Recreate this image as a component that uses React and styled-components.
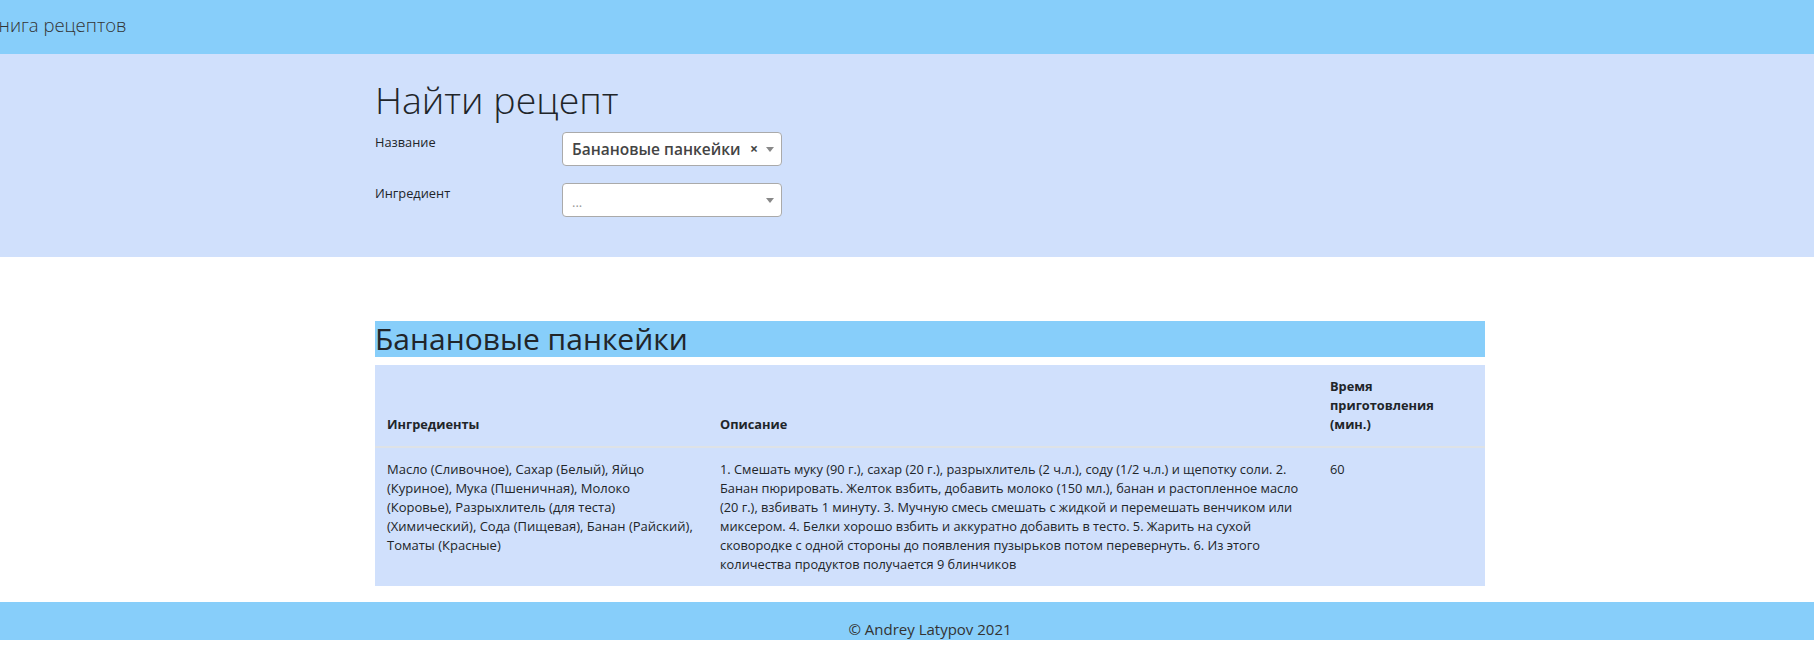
import React from 'react';
import styled, { createGlobalStyle } from 'styled-components';

const GlobalStyle = createGlobalStyle`
  body {
    margin: 0;
    font-family: "Open Sans", "Liberation Sans", sans-serif;
    color: #212529;
    background: #fff;
  }
`

// Layout
const Container = styled.div`
  width: 1110px;
  margin-left: calc(50% - 532px);
`
const Header = styled.header`
  height: 54px;
  box-sizing: border-box;
  padding-top: 11px;
  background: #87cefa;
  overflow: hidden;
`
const Brand = styled.a`
  display: block;
  margin-left: -12px;
  font-size: 18.5px;
  font-weight: 300;
  line-height: 28px;
  color: #333;
  text-decoration: none;
`
const Search = styled.section`
  background: #d0e0fc;
  padding: 22px 0 23px;
`
const Title = styled.h1`
  margin: 0 0 8px;
  font-size: 37.5px;
  font-weight: 300;
  line-height: 48px;
`
const FormRow = styled.div`
  display: grid;
  grid-template-columns: 187px 220px;
  margin-bottom: 17px;
`
const Label = styled.label`
  font-size: 12.8px;
  line-height: 19.2px;
  padding-top: 1px;
`

// Select
const SelectBox = styled.div`
  height: 34px;
  box-sizing: border-box;
  display: flex;
  align-items: center;
  padding: 0 7px 0 9px;
  background: #fff;
  border: 1px solid #aaa;
  border-radius: 4px;
`
const Value = styled.span`
  flex: 1;
  font-size: ${p => (p.placeholder ? '13px' : '15.5px')};
  font-weight: ${p => (p.placeholder ? 400 : 600)};
  color: ${p => (p.placeholder ? '#999' : '#444')};
  padding-top: ${p => (p.placeholder ? '4px' : '0')};
`
const Clear = styled.span`
  font-size: 14px;
  font-weight: 700;
  color: #444;
  margin-right: 8px;
  line-height: 1;
`
const Arrow = styled.span`
  width: 0;
  height: 0;
  border-style: solid;
  border-width: 5px 4px 0 4px;
  border-color: #888 transparent transparent transparent;
`

const Select = ({value, placeholder}) => (
  <SelectBox>
    <Value placeholder={value ? undefined : 1}>{value || placeholder}</Value>
    {value && <Clear>×</Clear>}
    <Arrow />
  </SelectBox>
);

// Recipe
const Main = styled.main`
  padding-top: 64px;
`
const RecipeTitle = styled.h2`
  margin: 0 0 8px;
  font-size: 30px;
  font-weight: 400;
  line-height: 36px;
  background: #87cefa;
`
const Table = styled.table`
  width: 1110px;
  table-layout: fixed;
  border-collapse: collapse;
  background: #d0e0fc;
  font-size: 12.8px;
  line-height: 19px;
  margin-bottom: 16px;
`
const Th = styled.th`
  width: ${p => p.w - 24}px;
  padding: 12px;
  text-align: left;
  vertical-align: bottom;
  font-weight: 700;
  border-bottom: 2px solid #dee2e6;
`
const Td = styled.td`
  padding: 12px;
  vertical-align: top;
  font-size: ${p => (p.wide ? '13px' : 'inherit')};
`
const Footer = styled.footer`
  height: 38px;
  box-sizing: border-box;
  padding: 16px 0 0 46px;
  background: #87cefa;
  text-align: center;
  font-size: 15px;
  line-height: 22px;
  color: #333;
  overflow: hidden;
`

const recipe = {
  name: 'Банановые панкейки',
  ingredients: 'Масло (Сливочное), Сахар (Белый), Яйцо (Куриное), Мука (Пшеничная), Молоко (Коровье), Разрыхлитель (для теста) (Химический), Сода (Пищевая), Банан (Райский), Томаты (Красные)',
  description: '1. Смешать муку (90 г.), сахар (20 г.), разрыхлитель (2 ч.л.), соду (1/2 ч.л.) и щепотку соли. 2. Банан пюрировать. Желток взбить, добавить молоко (150 мл.), банан и растопленное масло (20 г.), взбивать 1 минуту. 3. Мучную смесь смешать с жидкой и перемешать венчиком или миксером. 4. Белки хорошо взбить и аккуратно добавить в тесто. 5. Жарить на сухой сковородке с одной стороны до появления пузырьков потом перевернуть. 6. Из этого количества продуктов получается 9 блинчиков',
  time: 60,
};

const App = () => {
  return (
    <>
      <GlobalStyle />
      <Header>
        <Brand href="#">Книга рецептов</Brand>
      </Header>
      <Search>
        <Container>
          <Title>Найти рецепт</Title>
          <FormRow>
            <Label>Название</Label>
            <Select value={recipe.name} />
          </FormRow>
          <FormRow>
            <Label>Ингредиент</Label>
            <Select placeholder="..." />
          </FormRow>
        </Container>
      </Search>
      <Main>
        <Container>
          <RecipeTitle>{recipe.name}</RecipeTitle>
          <Table>
            <thead>
              <tr>
                <Th w={333}>Ингредиенты</Th>
                <Th w={610}>Описание</Th>
                <Th w={167}>Время приготовления (мин.)</Th>
              </tr>
            </thead>
            <tbody>
              <tr>
                <Td wide>{recipe.ingredients}</Td>
                <Td>{recipe.description}</Td>
                <Td>{recipe.time}</Td>
              </tr>
            </tbody>
          </Table>
        </Container>
      </Main>
      <Footer>© Andrey Latypov 2021</Footer>
    </>
  );
};

export default App;
